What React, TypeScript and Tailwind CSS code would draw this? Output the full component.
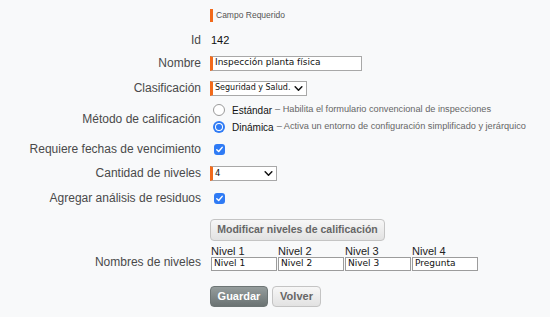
import React from 'react'

const sans = { fontFamily: '"Liberation Sans", Arial, sans-serif' }
const field = { fontFamily: '"DejaVu Sans", Verdana, sans-serif' }

function Row({ label, h, children, align = 'items-center', labelClass = '' }: { label?: string; h: string; children?: React.ReactNode; align?: string; labelClass?: string }) {
  return (
    <div className={`flex ${align} ${h}`}>
      <div className={`w-[201px] shrink-0 text-right text-[12px] leading-none text-[#4a4a4a] ${labelClass}`}>{label}</div>
      <div className="ml-[9px] flex items-center">{children}</div>
    </div>
  )
}

function Check() {
  return (
    <span className="ml-[4px] flex h-[11px] w-[11px] items-center justify-center rounded-[3px] bg-[#2f7bf5]">
      <svg viewBox="0 0 10 10" className="h-[9px] w-[9px]">
        <path d="M2 5.2 L4.1 7.3 L8 2.6" fill="none" stroke="white" strokeWidth="1.6" strokeLinecap="round" strokeLinejoin="round" />
      </svg>
    </span>
  )
}

function Chevron() {
  return (
    <svg viewBox="0 0 10 6" className="h-[5px] w-[9px] shrink-0">
      <path d="M1 1 L5 5 L9 1" fill="none" stroke="#111" strokeWidth="1.8" strokeLinecap="round" strokeLinejoin="round" />
    </svg>
  )
}

export default function App() {
  const niveles = [
    { h: 'Nivel 1', v: 'Nivel 1' },
    { h: 'Nivel 2', v: 'Nivel 2' },
    { h: 'Nivel 3', v: 'Nivel 3' },
    { h: 'Nivel 4', v: 'Pregunta' },
  ]
  return (
    <div className="h-[317px] w-[550px] bg-[#f8f9fa] pt-[3px]" style={sans}>
      <Row h="h-[24px]">
        <span className="h-[13px] w-[3px] bg-[#f26a1b]" />
        <span className="ml-[3px] text-[8.5px] text-[#555]">Campo Requerido</span>
      </Row>
      <Row label="Id" h="h-[26px]">
        <span className="ml-[1px] text-[11px] text-[#111]">142</span>
      </Row>
      <Row label="Nombre" h="h-[20px]">
        <div className="flex h-[15px] w-[152px] items-center border border-l-[3px] border-[#a8a8a8] border-l-[#f26a1b] bg-white pl-[2px] text-[9px] text-[#111]" style={field}>
          Inspección planta física
        </div>
      </Row>
      <Row label="Clasificación" h="h-[30px]">
        <div className="flex h-[15px] w-[97px] items-center justify-between whitespace-nowrap border border-l-[3px] border-[#a8a8a8] border-l-[#f26a1b] bg-white pl-[2px] pr-[3px] text-[8px] text-[#111]" style={field}>
          <span>Seguridad y Salud.</span>
          <Chevron />
        </div>
      </Row>
      <Row label="Método de calificación" h="h-[31px]">
        <div className="flex flex-col gap-[2px] whitespace-nowrap">
          <div className="flex items-center">
            <span className="ml-[3px] h-[12px] w-[12px] rounded-full border border-[#9a9a9a] bg-white" />
            <span className="ml-[7px] text-[10px] text-[#111]">Estándar</span>
            <span className="ml-[3px] text-[9.2px] text-[#666]">– Habilita el formulario convencional de inspecciones</span>
          </div>
          <div className="flex items-center">
            <span className="ml-[3px] flex h-[12px] w-[12px] items-center justify-center rounded-full bg-[#2f7bf5]">
              <span className="flex h-[8px] w-[8px] items-center justify-center rounded-full bg-white">
                <span className="h-[6px] w-[6px] rounded-full bg-[#2f7bf5]" />
              </span>
            </span>
            <span className="ml-[7px] text-[10px] text-[#111]">Dinámica</span>
            <span className="ml-[3px] text-[9.2px] text-[#666]">– Activa un entorno de configuración simplificado y jerárquico</span>
          </div>
        </div>
      </Row>
      <Row label="Requiere fechas de vencimiento" h="h-[30px]">
        <Check />
      </Row>
      <Row label="Cantidad de niveles" h="h-[18px]">
        <div className="flex h-[15px] w-[67px] items-center justify-between border border-l-[3px] border-[#a8a8a8] border-l-[#f26a1b] bg-white pl-[2px] pr-[3px] text-[8.4px] text-[#111]" style={field}>
          <span>4</span>
          <Chevron />
        </div>
      </Row>
      <Row label="Agregar análisis de residuos" h="h-[32px]">
        <Check />
      </Row>
      <Row h="h-[31px]" align="items-start">
        <button className="mt-[5px] h-[22px] w-[175px] rounded-[4px] border border-[#c4c4c4] bg-gradient-to-b from-[#f7f7f7] to-[#e2e2e2] text-[10.5px] font-bold text-[#666]">
          Modificar niveles de calificación
        </button>
      </Row>
      <Row label="Nombres de niveles" h="h-[26px]" align="items-end" labelClass="mb-[3px]">
        <div className="ml-[1px] flex gap-[1px]">
          {niveles.map((n) => (
            <div key={n.h} className="flex w-[66px] flex-col">
              <span className="text-[11px] leading-[11px] text-[#222]">{n.h}</span>
              <div className="flex h-[14px] items-center border border-[#9c9c9c] bg-white pl-[2px] text-[9px] text-[#111]" style={field}>
                {n.v}
              </div>
            </div>
          ))}
        </div>
      </Row>
      <Row h="h-[36px]" align="items-end">
        <div className="flex gap-[4px]">
          <button className="h-[21px] w-[58px] rounded-[4px] border border-[#6d7575] bg-gradient-to-b from-[#959d9d] to-[#6b7373] text-[11px] font-bold text-white">
            Guardar
          </button>
          <button className="h-[21px] w-[49px] rounded-[4px] border border-[#c4c4c4] bg-gradient-to-b from-[#f7f7f7] to-[#e2e2e2] text-[11px] font-bold text-[#666]">
            Volver
          </button>
        </div>
      </Row>
    </div>
  )
}
